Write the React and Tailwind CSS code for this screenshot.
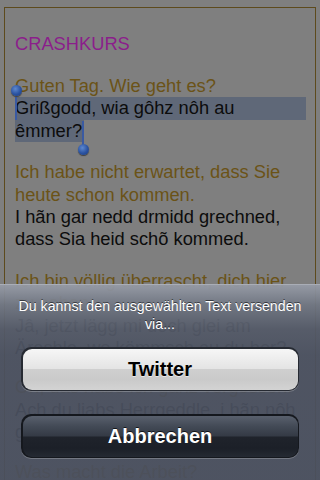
export default function App() {
  const brown = "text-[#6b5317]";
  const black = "text-[#0c0c0c]";
  return (
    <div className="relative w-[320px] h-[480px] overflow-hidden bg-[#7f7f7f] font-['Liberation_Sans',Arial,sans-serif]">
      <div className="ml-[4px] mt-[7px] w-[312px] h-[600px] border border-[#5d4a1c] pt-[25px] pl-[10px] pr-[9px] text-[18.3px] leading-[22.4px]">
        <div className="mb-[19.5px] text-[#8b1e8b]">CRASHKURS</div>

        <div className="mb-[19px]">
          <div className={brown}>Guten Tag. Wie geht es?</div>
          <div className={`relative bg-[#5f6878] ${black}`}>
            Grißgodd, wia gôhz nôh au
            <span className="absolute left-0 top-0 bottom-0 w-[2px] bg-[#3a5aa2]" />
            <span className="absolute left-[-4px] top-[-12px] w-[11px] h-[11px] rounded-full bg-[radial-gradient(circle_at_40%_35%,#5d88cf_0%,#2a52a0_55%,#1b3c80_100%)] shadow-[0_1px_1px_rgba(0,0,0,0.5)]" />
          </div>
          <div>
            <span className={`relative inline-block pr-[2px] bg-[#5f6878] ${black}`}>
              êmmer?
              <span className="absolute right-0 top-[1px] bottom-[-4px] w-[2px] bg-[#3a5aa2]" />
              <span className="absolute right-[-5px] top-[24px] w-[11px] h-[11px] rounded-full bg-[radial-gradient(circle_at_40%_35%,#5d88cf_0%,#2a52a0_55%,#1b3c80_100%)] shadow-[0_1px_1px_rgba(0,0,0,0.5)]" />
            </span>
          </div>
        </div>

        <div className="mb-[19px]">
          <div className={brown}>Ich habe nicht erwartet, dass Sie</div>
          <div className={brown}>heute schon kommen.</div>
          <div className={black}>I hãn gar nedd drmidd grechned,</div>
          <div className={black}>dass Sia heid schõ kommed.</div>
        </div>

        <div className="mb-[17px]">
          <div className={brown}>Ich bin völlig überrascht, dich hier</div>
          <div className={brown}>zu sehen.</div>
          <div className={black}>Jâ, jetzt lägg mi doch glei am</div>
          <div className={black}>Äreshle, wo kömmsch au du her?</div>
        </div>

        <div className="mb-[17px]">
          <div className={brown}>Oh, das habe ich ganz vergessen.</div>
          <div className={black}>Ach du liabs Herrgeddle, i hãn nôh</div>
          <div className={black}>gar nix drvo gwissd.</div>
        </div>

        <div>
          <div className={brown}>Was macht die Arbeit?</div>
        </div>
      </div>

      <div className="absolute left-0 right-0 top-[284px] bottom-0 border-t border-[#a9adb6] bg-[linear-gradient(to_bottom,rgba(150,155,166,0.95)_0px,rgba(112,118,130,0.94)_20px,rgba(84,90,104,0.94)_44px,rgba(75,81,96,0.93)_70px,rgba(74,80,95,0.93)_100%)] flex flex-col">
        <div className="pt-[12px] px-[8px] text-center text-white text-[14.2px] leading-[18px] [text-shadow:0_-1px_0_rgba(0,0,0,0.55)]">
          Du kannst den ausgewählten Text versenden
          <br />
          via...
        </div>

        <div className="mt-[14px] mx-[21px] h-[44px] rounded-[10px] bg-[#262a32] p-[1.5px] shadow-[0_1px_0_rgba(255,255,255,0.25)]">
          <div className="h-full rounded-[9px] bg-[linear-gradient(to_bottom,#f6f6f6_0%,#e4e4e4_48%,#cfcfcf_50%,#cacaca_75%,#d3d3d3_100%)] flex items-center justify-center text-[20px] font-bold text-black [text-shadow:0_1px_0_rgba(255,255,255,0.6)]">
            Twitter
          </div>
        </div>

        <div className="mt-[23px] mx-[21px] h-[44px] rounded-[10px] bg-[#15181e] p-[1.5px] shadow-[0_1px_0_rgba(255,255,255,0.22)]">
          <div className="h-full rounded-[9px] bg-[linear-gradient(to_bottom,#59606d_0%,#434a56_25%,#343a45_49%,#1f232b_51%,#1c2028_80%,#252a33_100%)] flex items-center justify-center text-[20px] font-bold text-white [text-shadow:0_-1px_0_rgba(0,0,0,0.7)]">
            Abbrechen
          </div>
        </div>
      </div>
    </div>
  );
}
